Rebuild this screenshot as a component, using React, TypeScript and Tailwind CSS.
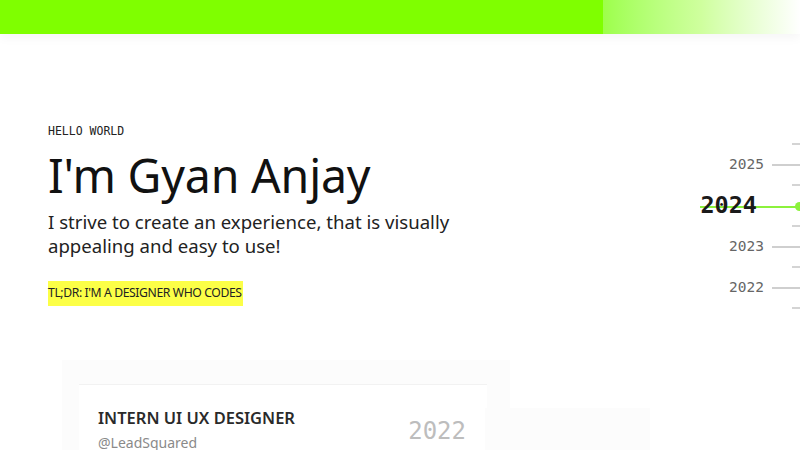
import React from "react";

const sans = { fontFamily: '"Noto Sans", "Open Sans", sans-serif' };
const mono = { fontFamily: '"DejaVu Sans Mono", "Liberation Mono", monospace' };

function Tick() {
  return (
    <div className="h-[20.5px] flex items-center justify-end">
      <div className="w-[8px] h-[2px] bg-[#d4d4d4]" />
    </div>
  );
}

function Year({ y }: { y: string }) {
  return (
    <div className="h-[20.5px] flex items-center justify-end gap-[8px]">
      <span className="text-[14.5px] text-[#666]" style={mono}>{y}</span>
      <div className="w-[28px] h-[2px] bg-[#cfcfcf]" />
    </div>
  );
}

export default function App() {
  return (
    <div className="w-[800px] h-[450px] overflow-hidden bg-white relative" style={sans}>
      <div className="h-[34px] flex shadow-[0_4px_10px_rgba(0,0,0,0.04)]">
        <div className="w-[603px] bg-[#7fff00]" />
        <div className="flex-1 bg-gradient-to-r from-[#9dff4a] via-[#cfff9e] to-white" />
      </div>
      <div className="flex">
        <div className="flex-1 pl-[48px] pt-[90px]">
          <div className="text-[11.5px] leading-[14px] text-[#222]" style={mono}>HELLO WORLD</div>
          <h1 className="mt-[11px] text-[46.5px] leading-[52px] text-[#111] tracking-[-0.2px]">I'm Gyan Anjay</h1>
          <p className="mt-[9px] text-[18.6px] leading-[24px] text-[#222] w-[430px]">
            I strive to create an experience, that is visually appealing and easy to use!
          </p>
          <div className="mt-[23px] w-[195px] h-[25px] bg-[#fcff47] flex items-center">
            <span className="text-[12.2px] text-[#222] tracking-[-0.4px] whitespace-nowrap">TL;DR: I'M A DESIGNER WHO CODES</span>
          </div>
          <div className="mt-[54px] flex items-start">
            <div className="ml-[14px] w-[448px] h-[200px] bg-[#fcfcfc] pt-[24px] pl-[17px]">
              <div className="w-[408px] h-[200px] bg-white border-t border-[#f2f2f2] px-[19px] pt-[23px] flex justify-between">
                <div>
                  <div className="text-[16.5px] leading-[20px] font-semibold text-[#2a2a2a]">INTERN UI UX DESIGNER</div>
                  <div className="mt-[6px] text-[14px] leading-[18px] text-[#8a8a8a]">@LeadSquared</div>
                </div>
                <div className="mt-[9px] mr-[2px] text-[24px] leading-[28px] text-[#bdbdbd]" style={mono}>2022</div>
              </div>
            </div>
            <div className="mt-[48px] -ml-[25px] w-[165px] h-[100px] bg-[#fcfcfc]" />
          </div>
        </div>
        <div className="w-[110px] pt-[100px] relative">
          <Tick />
          <Year y="2025" />
          <Tick />
          <div className="h-[20.5px] flex items-center justify-end relative">
            <div className="absolute left-[10px] right-0 top-1/2 h-[2px] bg-[#8cf23c]" />
            <div className="absolute right-[-4px] top-1/2 -mt-[4px] w-[9px] h-[9px] rounded-full bg-[#8cf23c]" />
            <span className="relative mr-[43px] text-[23.5px] font-bold text-[#1a1a1a]" style={mono}>2024</span>
          </div>
          <Tick />
          <Year y="2023" />
          <Tick />
          <Year y="2022" />
          <Tick />
        </div>
      </div>
    </div>
  );
}
